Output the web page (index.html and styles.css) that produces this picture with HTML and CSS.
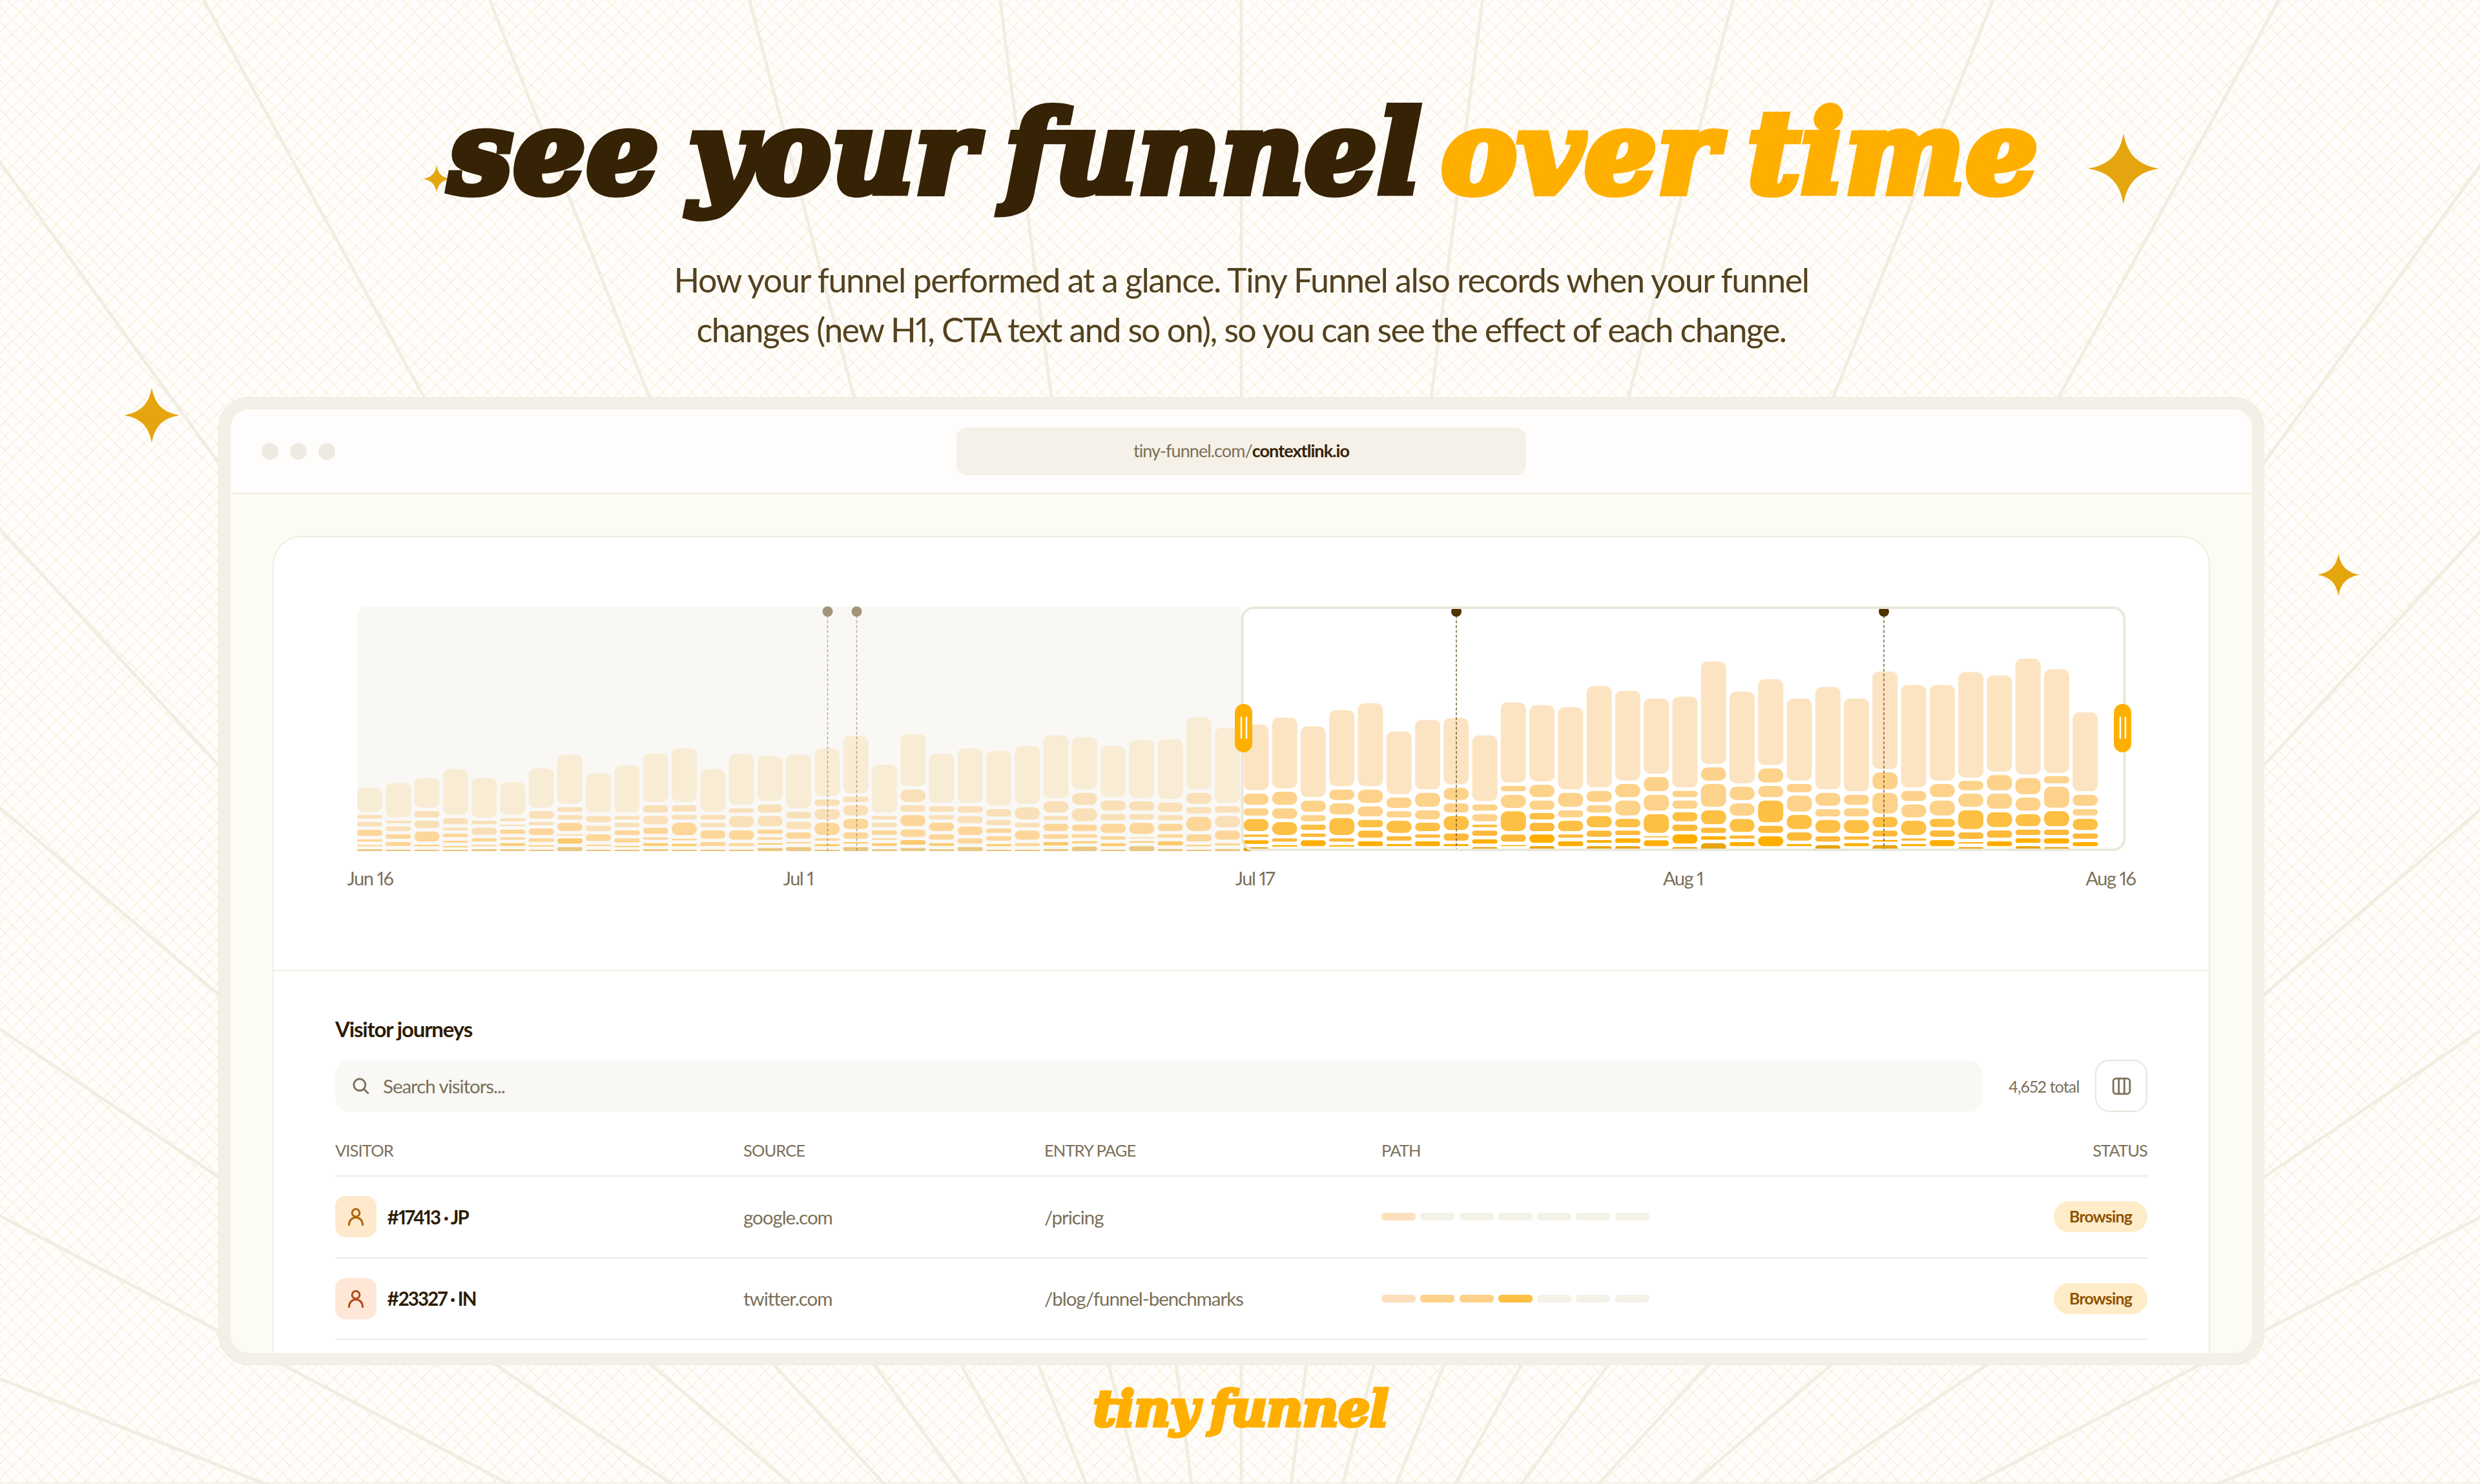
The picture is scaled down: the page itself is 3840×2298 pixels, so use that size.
FILE: index.html
```html
<!DOCTYPE html>
<html lang="en">
<head>
  <meta charset="UTF-8">
  <title>Tiny Funnel</title>
  <link rel="stylesheet" href="styles.css">
</head>
<body>
  <svg class="rays" id="rays" viewBox="0 0 3840 2298"></svg>

  <!-- Sparkles -->
  <svg class="sparkle sparkle-1" viewBox="-50 -50 100 100"><path d="M0-50C5-20 20-5 50 0C20 5 5 20 0 50C-5 20-20 5-50 0C-20-5-5-20 0-50Z"/></svg>
  <svg class="sparkle sparkle-2" viewBox="-50 -50 100 100"><path d="M0-50C5-20 20-5 50 0C20 5 5 20 0 50C-5 20-20 5-50 0C-20-5-5-20 0-50Z"/></svg>
  <svg class="sparkle sparkle-3" viewBox="-50 -50 100 100"><path d="M0-50C5-20 20-5 50 0C20 5 5 20 0 50C-5 20-20 5-50 0C-20-5-5-20 0-50Z"/></svg>
  <svg class="sparkle sparkle-4" viewBox="-50 -50 100 100"><path d="M0-50C5-20 20-5 50 0C20 5 5 20 0 50C-5 20-20 5-50 0C-20-5-5-20 0-50Z"/></svg>

  <header class="hero">
    <h1><span class="dark">see your funnel</span><span class="accent">over time</span></h1>
    <p class="line-1">How your funnel performed at a glance. Tiny Funnel also records when your funnel</p>
    <p class="line-2">changes (new H1, CTA text and so on), so you can see the effect of each change.</p>
  </header>

  <main class="browser">
    <div class="toolbar">
      <div class="dots"><i></i><i></i><i></i></div>
      <div class="address"><span>tiny-funnel.com/<b>contextlink.io</b></span></div>
    </div>
    <div class="page">
      <div class="card">
        <section class="timeline">
          <svg class="chart" id="chart" viewBox="0 0 2738 379"></svg>
        </section>

        <section class="journeys">
          <h2>Visitor journeys</h2>
          <div class="filters">
            <div class="search">
              <svg viewBox="0 0 24 24"><circle cx="10.5" cy="10.5" r="8"/><path d="M16.5 16.5 22 22"/></svg>
              <span>Search visitors...</span>
            </div>
            <span class="total">4,652 total</span>
            <button class="columns-btn">
              <svg viewBox="0 0 28 28"><rect x="2" y="3" width="24" height="22" rx="4"/><path d="M10 3v22M18 3v22"/></svg>
            </button>
          </div>

          <div class="row head">
            <span class="th">VISITOR</span><span class="th">SOURCE</span><span class="th">ENTRY PAGE</span><span class="th">PATH</span><span class="th right">STATUS</span>
          </div>
          <div class="row">
            <div class="visitor">
              <div class="avatar amber"><svg viewBox="0 0 24 24"><circle cx="12" cy="7" r="5"/><path d="M3 23c0-6 4-10 9-10s9 4 9 10"/></svg></div>
              <b>#17413 · JP</b>
            </div>
            <span>google.com</span>
            <span>/pricing</span>
            <div class="path"><i class="s1"></i><i></i><i></i><i></i><i></i><i></i><i></i></div>
            <div class="right"><span class="badge">Browsing</span></div>
          </div>
          <div class="row">
            <div class="visitor">
              <div class="avatar orange"><svg viewBox="0 0 24 24"><circle cx="12" cy="7" r="5"/><path d="M3 23c0-6 4-10 9-10s9 4 9 10"/></svg></div>
              <b>#23327 · IN</b>
            </div>
            <span>twitter.com</span>
            <span>/blog/funnel-benchmarks</span>
            <div class="path"><i class="s1"></i><i class="s2"></i><i class="s2"></i><i class="s3"></i><i></i><i></i><i></i></div>
            <div class="right"><span class="badge">Browsing</span></div>
          </div>
        </section>
      </div>
    </div>
  </main>

  <footer class="logo"><span>tiny funnel</span></footer>

  <script src="script.js"></script>
</body>
</html>
```
FILE: styles.css
```css
* { box-sizing: border-box; }
body {
  position: relative;
  margin: 0;
  width: 3840px;
  height: 2298px;
  overflow: hidden;
  font-family: Lato, "Open Sans", sans-serif;
  font-variant-numeric: proportional-nums;
  color: #7b6f58;
  background:
    linear-gradient(#f3efe4, #f3efe4) 0 2295px / 100% 2px no-repeat,
    repeating-linear-gradient(45deg, rgba(240, 222, 180, 0.25) 0 2.5px, transparent 2.5px 16px),
    repeating-linear-gradient(-45deg, rgba(240, 222, 180, 0.25) 0 2.5px, transparent 2.5px 16px),
    #fffefc;
}
h1, h2, p { margin: 0; }

/* Background */
.rays { position: absolute; left: 0; top: 0; width: 3840px; height: 2298px; }
.rays line { stroke: #f2ede2; stroke-width: 5; }
.sparkle { position: absolute; fill: #e5a50f; }
.sparkle-1 { left: 655px; top: 256px; width: 42px; height: 42px; }
.sparkle-2 { left: 3233px; top: 206px; width: 110px; height: 110px; }
.sparkle-3 { left: 192px; top: 600px; width: 86px; height: 86px; }
.sparkle-4 { left: 3588px; top: 857px; width: 66px; height: 66px; }

/* Hero */
.hero { position: relative; height: 615px; padding-top: 116px; padding-left: 4px; text-align: center; white-space: nowrap; }
h1 {
  display: flex;
  justify-content: center;
  gap: 30px;
  height: 279px;
  padding-left: 8px;
  font: italic 700 174px/242px "DejaVu Serif", "Liberation Serif", serif;
  letter-spacing: 2.4px;
  word-spacing: -18px;
}
.dark { color: #362204; -webkit-text-stroke: 12px #362204; }
.accent { color: #ffaf00; -webkit-text-stroke: 12px #ffaf00; }
.hero p { font-size: 52px; line-height: 77px; letter-spacing: -0.0285em; color: #54421f; }
.hero .line-2 { letter-spacing: -0.031em; }

/* Browser window */
.browser {
  position: relative;
  width: 3168px;
  height: 1499px;
  margin-left: 338px;
  border: 19px solid #f4f0e7;
  border-radius: 48px;
  outline: 1px solid #efebdf;
  outline-offset: -1px;
  overflow: hidden;
  background: #fcfcf3;
}
.browser * { letter-spacing: -0.035em; }
.toolbar {
  display: grid;
  grid-template-columns: 1fr 882px 1fr;
  align-items: center;
  height: 131px;
  padding: 0 48px;
  border-bottom: 2px solid #efede0;
  background: #fefdfc;
}
.dots { display: flex; gap: 18px; }
.dots i { width: 26px; height: 26px; border-radius: 50%; background: #eeeae1; }
.address {
  height: 74px;
  border-radius: 16px;
  background: #f5f1e8;
  text-align: center;
  font-size: 27px;
  line-height: 72px;
}
.address b { font-weight: 700; color: #362204; }
.page { padding: 65px 65px 0; }
.card {
  height: 1400px;
  border: 2px solid #efede2;
  border-radius: 44px;
  background: #fff;
}

/* Timeline */
.timeline { height: 672px; padding: 107px 0 0 129px; border-bottom: 2px solid #f0eee1; }
.chart { display: block; width: 2738px; height: 379px; overflow: visible; }
.chart text { font-size: 29px; fill: #7b6f58; text-anchor: middle; letter-spacing: -0.05em; }
.l1 { fill: #fce4c3; }
.l2 { fill: #fdd28a; }
.l3 { fill: #fdc044; }
.l4 { fill: #fdb93a; }
.l5 { fill: #ffaf00; }
.l6 { fill: #e5a50f; }
.muted .l1 { fill: #f8ecd5; }
.muted .l2 { fill: #fae0b8; }
.muted .l3, .muted .l4 { fill: #fdd699; }
.muted .l5 { fill: #fccb6e; }
.muted .l6 { fill: #eac884; }
.shade { fill: #f9f8f5; }
.selection { fill: none; stroke: #eae8dc; stroke-width: 4; }
.marker line { stroke: #4d3400; stroke-width: 1.5; stroke-dasharray: 4.5 3; opacity: 0.75; }
.marker circle { fill: #4d3400; }
.marker.past { opacity: 0.5; }
.handle rect { fill: #ffaf00; }
.handle path { stroke: #fff; stroke-width: 2.5; }

/* Visitor journeys */
.journeys { padding: 66px 95px 0 95px; }
h2 { font-size: 33px; line-height: 46px; font-weight: 700; color: #2c1c03; }
.filters { display: flex; align-items: center; margin-top: 25px; }
.search {
  display: flex;
  align-items: center;
  gap: 21px;
  flex: 1;
  height: 80px;
  padding-left: 26px;
  border-radius: 22px;
  background: #f9f8f5;
  font-size: 29.5px;
}
.search svg, .columns-btn svg { width: 27px; fill: none; stroke: #7b6f58; stroke-width: 2.6; stroke-linecap: round; }
.total { width: 110px; margin: 0 24px 0 40px; font-size: 25px; white-space: nowrap; }
.columns-btn { width: 81px; height: 81px; padding: 0; border: 2px solid #e8e5da; border-radius: 22px; background: #fff; }
.columns-btn svg { width: 30px; display: block; margin: auto; }
.row {
  display: grid;
  grid-template-columns: 632px 466px 522px 1fr 200px;
  align-items: center;
  height: 126.5px;
  border-bottom: 2px solid #ecebe7;
  font-size: 29.5px;
}
.row.head { height: 100px; padding-top: 20px; font-size: 25.5px; }
.right { text-align: right; }
.visitor { display: flex; align-items: center; gap: 16px; }
.visitor b { font-weight: 700; letter-spacing: -0.06em; color: #2c1c03; }
.avatar { display: flex; width: 64px; height: 64px; border-radius: 16px; }
.avatar svg { width: 28px; margin: auto; fill: none; stroke-width: 2.6; stroke-linecap: round; }
.amber { background: #ffe9cc; stroke: #b06500; }
.orange { background: #fee7d6; stroke: #b34a1a; }
.path { display: flex; gap: 7.3px; }
.path i { width: 53px; height: 12px; border-radius: 5px; background: #f4f1e7; }
.path .s1 { background: #fce0bd; }
.path .s2 { background: #fdd28a; }
.path .s3 { background: #fdc044; }
.badge {
  display: inline-block;
  height: 48px;
  padding: 0 24px;
  border-radius: 24px;
  background: #feecc9;
  color: #8f5200;
  font-size: 25px;
  line-height: 46px;
  font-weight: 700;
}

.logo {
  height: 184px;
  padding: 17px 0 0 2px;
  text-align: center;
  font: italic 700 77px/100px "DejaVu Serif", "Liberation Serif", serif;
  letter-spacing: -0.5px;
  word-spacing: -9px;
  color: #ffaf00;
  -webkit-text-stroke: 5px #ffaf00;
  position: relative;
}
```
FILE: script.js
```js
// Rays fan out from a point below the page, given as tangents from the vertical
const tans = [0, 0.129, 0.263, 0.402, 0.555, 0.727, 0.926, 1.169, 1.477, 1.899, 2.53, 3.64];
const cx = 1922, cy = 2895;
let rays = '';
tans.forEach(t => {
  [-1, 1].forEach(side => {
    if (t === 0 && side === 1) return;
    const len = Math.min(cy, 2100 / (t || 0.01));
    rays += `<line x1="${cx}" y1="${cy}" x2="${cx + side * t * len}" y2="${cy - len}"/>`;
  });
});
document.getElementById('rays').innerHTML = rays;

// Top edge of each funnel step per day, in thirds of a pixel (0 = step not reached)
const BASE = 1197, TOP = 60, GAP = 16;
const days = [
  [903,1030,1062,1098,1142,1169,1188], [880,1056,1083,1119,1155,0,1190], [857,1011,1056,1106,0,1168,1190],
  [816,1044,1088,1116,1148,1174,1190], [857,1056,1088,1137,0,1169,1188], [876,1044,1074,1097,1133,1160,1188],
  [813,1011,1062,1092,1138,1170,1190], [749,993,1030,1066,1119,1138,1178], [836,1034,1079,1119,1166,0,1190],
  [799,1034,1066,1101,1138,1173,1190], [743,984,1034,1088,1133,1160,1188], [719,984,1029,1065,1139,1163,1190],
  [816,1029,1066,1101,1155,0,1190], [745,998,1034,1101,1160,0,1190], [755,980,1034,1097,1133,1160,1183],
  [749,1015,1061,1110,1155,0,1178], [720,957,1002,1065,1138,1164,1190], [662,944,984,1047,1110,1155,1178],
  [795,1034,1066,1101,1137,1160,1188], [653,911,984,1030,1097,1146,1183], [745,989,1030,1065,1119,1160,1188],
  [719,989,1034,1083,1138,0,1178], [731,1002,1052,1092,1128,1164,1190], [708,993,1066,1102,1160,0,1190],
  [659,966,1034,1070,1119,1155,1187], [668,926,998,1074,1119,1151,1176], [708,962,1025,1070,1128,1160,1190],
  [681,966,1025,1066,1133,1151,1174], [677,971,1030,1070,1119,1151,1187], [577,926,993,1038,1119,1168,1190],
  [623,989,1034,1102,1160,0,1187], [609,930,998,1048,1120,1147,1179], [577,921,998,1062,1138,1169,1192],
  [618,962,1030,1074,1115,1147,1190], [542,911,975,1043,1138,1169,1192], [510,911,989,1052,1102,1151,1190],
  [641,948,1012,1056,1128,1164,1190], [587,926,1007,1065,1120,1151,1190], [578,903,975,1034,1115,1164,1190],
  [659,980,1025,1074,1102,1142,1178], [506,894,935,1012,1120,1169,1190], [519,889,962,1020,1066,1120,1174],
  [528,926,1007,1056,1120,1151,1190], [430,917,984,1034,1102,1146,1174], [452,885,962,1047,1102,1138,1174],
  [488,853,935,1025,1128,1147,1190], [479,917,962,1016,1074,1119,1178], [316,808,885,1007,1088,1128,1160],
  [456,898,975,1048,1124,1155,1190], [398,813,894,962,1079,1128,1190], [488,885,939,1029,1110,1164,1190],
  [434,926,1002,1052,1128,0,1169], [488,935,998,1052,1129,1160,1190], [362,831,926,1038,1102,1145,1169],
  [425,917,980,1056,1138,1164,1190], [425,885,962,1047,1101,1146,1190], [365,871,930,1007,1110,1156,1178],
  [380,844,930,1016,1101,1151,1190], [302,857,948,1025,1097,1138,1174], [352,849,898,1011,1097,1138,1178],
  [552,935,1002,1047,1115,1155,1190]
];
const levels = ['l1', 'l2', 'l2', 'l3', 'l4', 'l5', 'l6'];

function bar(day, i) {
  const x = i * 44.27;
  let out = '';
  day.forEach((top, k) => {
    if (!top) return;
    const next = day.slice(k + 1).find(v => v);
    const h = Math.max(5, next ? next - top - GAP : BASE - top) / 3;
    out += `<rect class="${levels[k]}" x="${x}" y="${(top - TOP) / 3}" width="39" height="${h}" rx="${Math.min(10, h / 2)}"/>`;
  });
  return out;
}
function marker(x, past) {
  return `<g class="marker ${past ? 'past' : ''}"><line x1="${x}" y1="14" x2="${x}" y2="379"/><circle cx="${x}" cy="8" r="8"/></g>`;
}
function handle(x) {
  return `<g class="handle"><rect x="${x}" y="151" width="27" height="75" rx="13.5"/><path d="M${x + 10} 171v34M${x + 18} 171v34"/></g>`;
}
const labels = [[20, 'Jun 16'], [683, 'Jul 1'], [1390, 'Jul 17'], [2053, 'Aug 1'], [2715, 'Aug 16']];

document.getElementById('chart').innerHTML =
  '<path class="shade" d="M16 0H1369V379H0V16Q0 0 16 0Z"/>' +
  '<g class="muted">' + days.slice(0, 31).map(bar).join('') + '</g>' +
  days.slice(31).map((d, i) => bar(d, i + 31)).join('') +
  marker(728.5, true) + marker(773.5, true) + marker(1702, false) + marker(2364, false) +
  '<rect class="selection" x="1370.5" y="2" width="1366" height="375" rx="18"/>' +
  handle(1359) + handle(2720) +
  labels.map(l => `<text x="${l[0]}" y="432">${l[1]}</text>`).join('');
```
